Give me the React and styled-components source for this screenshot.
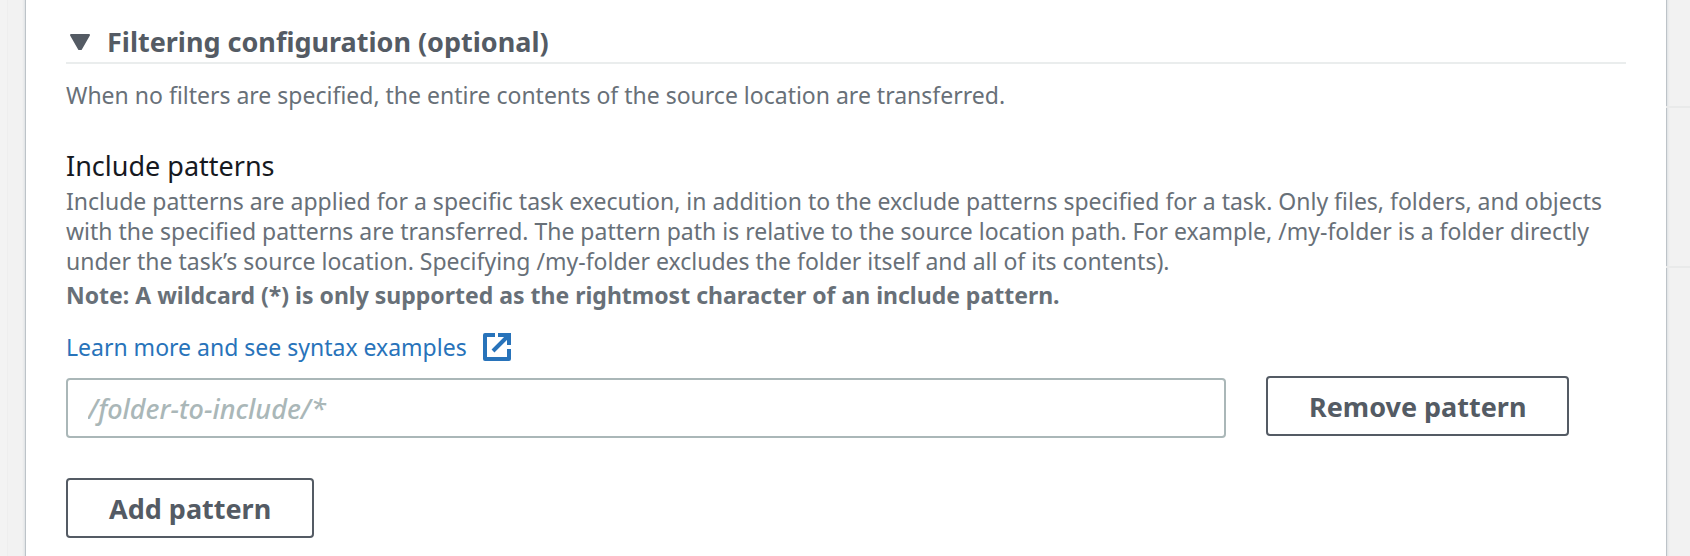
import React, { useState } from "react";
import styled, { createGlobalStyle, css } from "styled-components";

const GlobalStyle = createGlobalStyle`
  * { box-sizing: border-box; }
  body {
    margin: 0;
    background: #f2f2f2;
    font-family: "Noto Sans", "Open Sans", sans-serif;
    font-size: 23px;
    line-height: 30px;
    color: #687078;
  }
`;

const Page = styled.div`
  display: grid;
  grid-template-columns: 26px minmax(0, 1fr) 24px;
  min-height: 100vh;
`;

const LeftRail = styled.div`
  width: 8px;
  background: #f3f3f3;
  border-right: 1px solid #eeeeee;
`;

const RightRail = styled.div`
  display: flex;
  flex-direction: column;
`;

const RailBlock = styled.div`
  height: ${(p) => p.$height}px;
  border-bottom: 2px solid #e9eaea;
`;

const Panel = styled.main`
  background: #ffffff;
  padding: 24px 40px 18px;
  box-shadow: 0 0 0 1px #bdc3c8, 0 0 2px 2px #dce0e3;
`;

const SectionTitle = styled.h2`
  margin: 0 0 16px;
  padding-bottom: 2px;
  border-bottom: 2px solid #eaeded;
  font-size: 27px;
  line-height: 36px;
`;

const Toggle = styled.button`
  display: flex;
  align-items: center;
  gap: 16px;
  width: 100%;
  padding: 0 0 0 3px;
  border: 0;
  background: none;
  color: #545b64;
  font: inherit;
  font-weight: 700;
  text-align: left;
  cursor: pointer;
`;

const Caret = styled.svg`
  width: 22px;
  height: 18px;
  flex: none;
  fill: currentColor;
  stroke: currentColor;
  stroke-width: 2;
  stroke-linejoin: round;
`;

const Text = styled.p`
  margin: 0;
`;

const Note = styled.p`
  margin: 4px 0 22px;
  font-weight: 700;
`;

const FieldLabel = styled.label`
  display: block;
  margin: 38px 0 2px;
  font-size: 27px;
  line-height: 36px;
  color: #16191f;
`;

const LearnMore = styled.a`
  display: inline-flex;
  align-items: center;
  gap: 16px;
  color: #2873ba;
  text-decoration: none;
`;

const ExternalIcon = styled.svg`
  width: 28px;
  height: 28px;
  fill: none;
  stroke: currentColor;
  stroke-width: 4;
  stroke-linejoin: round;
`;

const PatternRow = styled.div`
  display: grid;
  grid-template-columns: repeat(12, minmax(0, 1fr));
  column-gap: 40px;
  align-items: start;
  margin: 14px 0 40px;
`;

const InputCell = styled.div`
  grid-column: span 9;
  padding-top: 2px;
`;

const ActionCell = styled.div`
  grid-column: span 3;
`;

const control = css`
  height: 60px;
  border-radius: 4px;
  background: #ffffff;
  font-family: inherit;
`;

const PatternInput = styled.input`
  ${control}
  display: block;
  width: 100%;
  padding: 0 20px;
  border: 2px solid #aab7b8;
  color: #16191f;
  font-size: 27px;

  &::placeholder {
    color: #aab7b8;
    font-style: italic;
    font-weight: 500;
    opacity: 1;
  }
`;

const Button = styled.button`
  ${control}
  display: block;
  padding: 0 41px;
  border: 2px solid #545b64;
  color: #545b64;
  font-size: 27px;
  font-weight: 700;
  white-space: nowrap;
  cursor: pointer;
`;

export default function App() {
  const [open, setOpen] = useState(true);
  const [patterns, setPatterns] = useState([{ id: 1, value: "" }]);

  const update = (id, value) =>
    setPatterns(patterns.map((p) => (p.id === id ? { id, value } : p)));
  const remove = (id) => setPatterns(patterns.filter((p) => p.id !== id));
  const add = () => setPatterns([...patterns, { id: Date.now(), value: "" }]);

  return (
    <Page>
      <GlobalStyle />
      <LeftRail />
      <Panel>
        <SectionTitle>
          <Toggle type="button" aria-expanded={open} onClick={() => setOpen(!open)}>
            <Caret viewBox="0 0 22 18" aria-hidden="true">
              <path d="M2 2H20L12 16H10Z" />
            </Caret>
            Filtering configuration (optional)
          </Toggle>
        </SectionTitle>
        {open && (
          <>
            <Text>
              When no filters are specified, the entire contents of the source location are
              transferred.
            </Text>
            <FieldLabel htmlFor="pattern-1">Include patterns</FieldLabel>
            <Text>
              Include patterns are applied for a specific task execution, in addition to the exclude
              patterns specified for a task. Only files, folders, and objects with the specified
              patterns are transferred. The pattern path is relative to the source location path.
              For example, /my-folder is a folder directly under the task’s source location.
              Specifying /my-folder excludes the folder itself and all of its contents).
            </Text>
            <Note>
              Note: A wildcard (*) is only supported as the rightmost character of an include
              pattern.
            </Note>
            <LearnMore href="#syntax">
              Learn more and see syntax examples
              <ExternalIcon viewBox="0 0 28 28" aria-hidden="true">
                <path d="M12 2H2V26H26V16" />
                <path d="M15 2H26V12" strokeLinejoin="miter" />
                <path d="M25 3L10 18" />
              </ExternalIcon>
            </LearnMore>
            {patterns.map((p) => (
              <PatternRow key={p.id}>
                <InputCell>
                  <PatternInput
                    id={`pattern-${p.id}`}
                    aria-label="Include patterns"
                    placeholder="/folder-to-include/*"
                    value={p.value}
                    onChange={(e) => update(p.id, e.target.value)}
                  />
                </InputCell>
                <ActionCell>
                  <Button type="button" onClick={() => remove(p.id)}>
                    Remove pattern
                  </Button>
                </ActionCell>
              </PatternRow>
            ))}
            <Button type="button" onClick={add}>
              Add pattern
            </Button>
          </>
        )}
      </Panel>
      <RightRail>
        <RailBlock $height={108} />
        <RailBlock $height={160} />
      </RightRail>
    </Page>
  );
}
